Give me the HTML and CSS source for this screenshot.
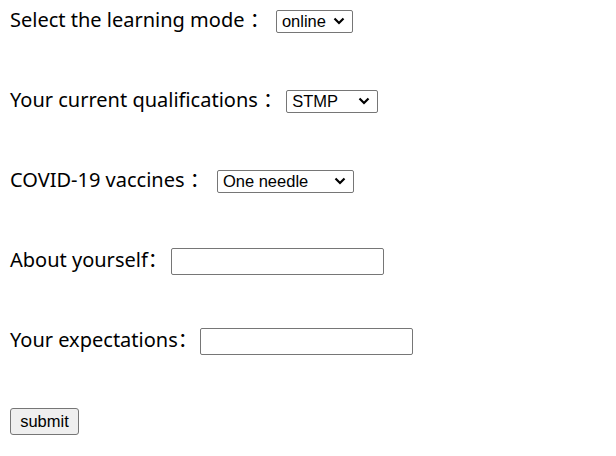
FILE: index.html
```html
<!DOCTYPE html>
<html>
<head>
<meta charset="utf-8">
<link rel="stylesheet" href="styles.css">
</head>
<body>
<form class="form">
  <div class="row"><span class="label">Select the learning mode ： </span><select class="sel sel-mode"><option>online</option><option>offline</option></select></div>
  <div class="row"><span class="label">Your current qualifications ： </span><select class="sel sel-qual"><option>STMP</option><option>Bachelor</option></select></div>
  <div class="row"><span class="label">COVID-19 vaccines ： </span><select class="sel sel-vac"><option>One needle</option><option>Two needles</option></select></div>
  <div class="row"><span class="label">About yourself： </span><input class="txt txt-about" type="text"></div>
  <div class="row"><span class="label">Your expectations： </span><input class="txt txt-expect" type="text"></div>
  <div class="row"><button class="btn" type="button">submit</button></div>
</form>
</body>
</html>
```

FILE: styles.css
```css
html, body {
  margin: 0;
  padding: 0;
  background: #fff;
}
body {
  padding: 0 10px;
  font-family: "Noto Sans", "Noto Sans CJK SC", sans-serif;
  font-size: 20px;
  color: #000;
}
.form {
  display: flex;
  flex-direction: column;
  gap: 38px;
}
.row {
  height: 42px;
  display: flex;
  align-items: center;
  white-space: pre;
}
.label {
  margin-bottom: 5px;
}
.sel {
  -webkit-appearance: none;
  appearance: none;
  box-sizing: border-box;
  height: 23px;
  margin: 0;
  padding: 0 0 0 5px;
  border: 1px solid #767676;
  border-radius: 2px;
  background-color: #fff;
  background-image: url("data:image/svg+xml;utf8,<svg xmlns='http://www.w3.org/2000/svg' width='12' height='8' viewBox='0 0 12 8'><path d='M1.5 1.5 L6 6 L10.5 1.5' fill='none' stroke='black' stroke-width='2.2'/></svg>");
  background-repeat: no-repeat;
  background-position: right 7px center;
  font-family: "Liberation Sans", Arial, sans-serif;
  font-size: 16.5px;
  color: #000;
}
.sel-mode { width: 77px; margin-left: 1px; }
.sel-qual { width: 92px; margin-left: -2px; }
.sel-vac { width: 137px; margin-left: 2px; }
.txt {
  box-sizing: border-box;
  width: 213px;
  height: 27px;
  margin: 0;
  border: 1px solid #767676;
  border-radius: 2px;
  padding: 1px 3px;
  font-family: "Liberation Sans", Arial, sans-serif;
  font-size: 16.5px;
}
.txt-about { margin-left: -2px; }
.txt-expect { margin-left: -3px; }
.btn {
  box-sizing: border-box;
  width: 69px;
  height: 27px;
  margin: 0;
  padding: 0;
  border: 1px solid #767676;
  border-radius: 3px;
  background: #efefef;
  font-family: "Liberation Sans", Arial, sans-serif;
  font-size: 16.5px;
  color: #000;
}
```
